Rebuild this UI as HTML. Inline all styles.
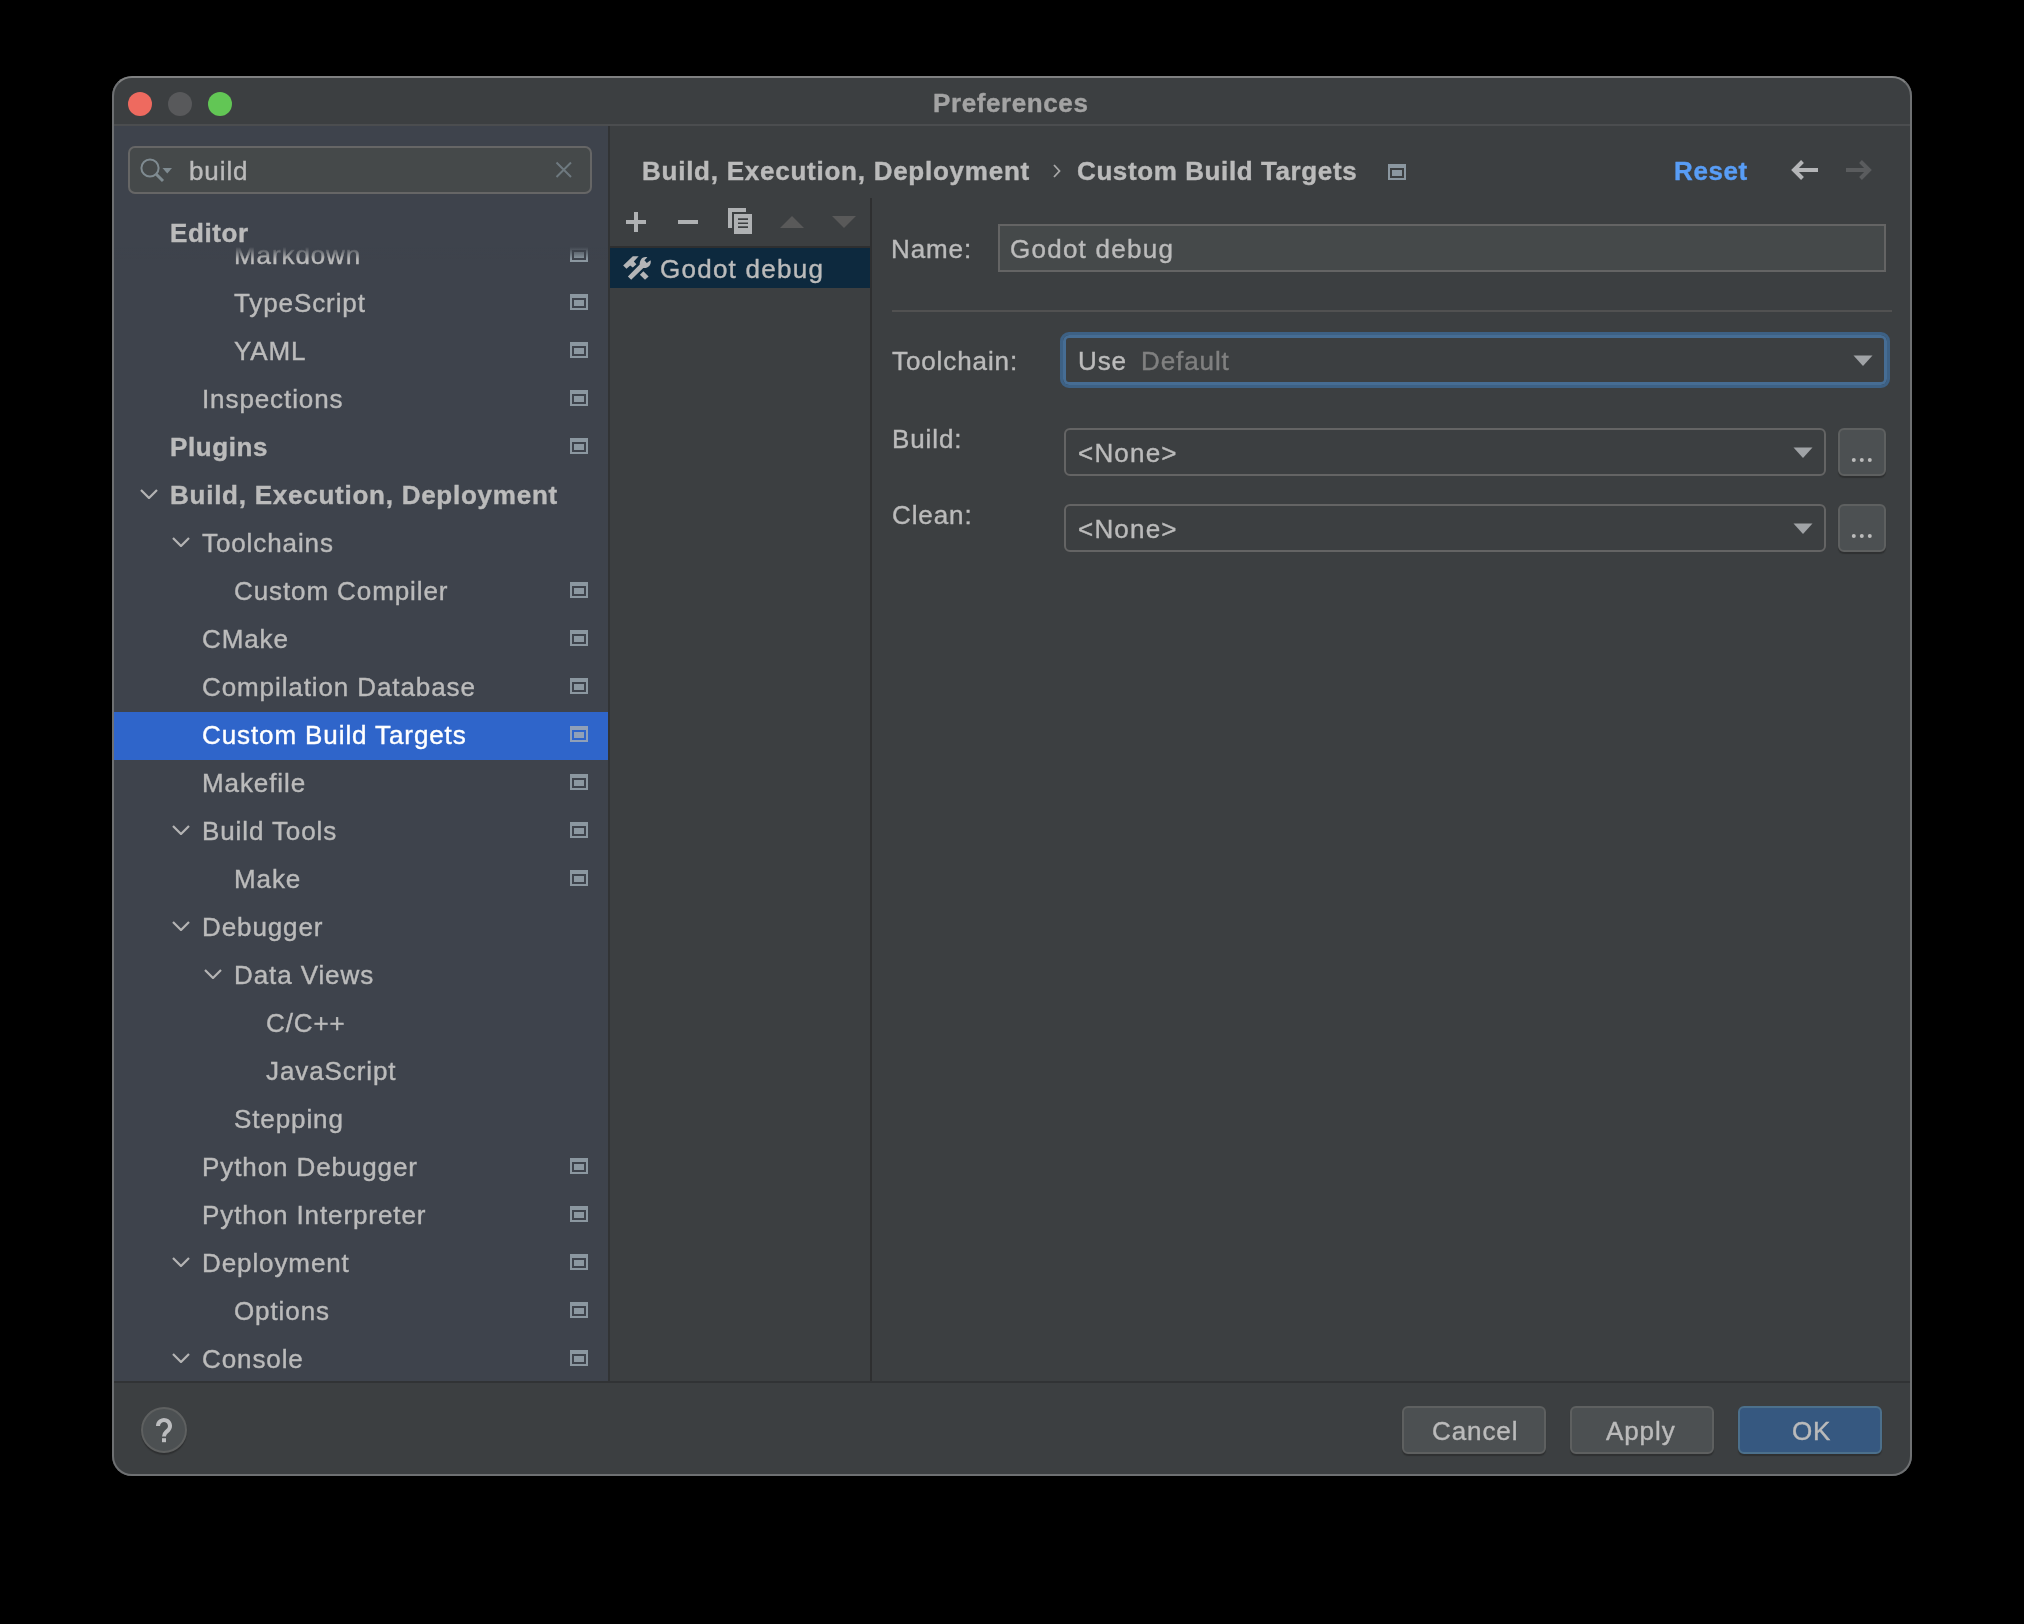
<!DOCTYPE html>
<html><head><meta charset="utf-8">
<style>
*{box-sizing:border-box;margin:0;padding:0}
html,body{width:2024px;height:1624px;background:#000;overflow:hidden}
body{position:relative;font-family:"Liberation Sans",sans-serif;color:#bbbbbb}
.a{position:absolute}
.t{position:absolute;font-size:26px;line-height:30px;white-space:pre;letter-spacing:0.9px;will-change:transform;-webkit-text-stroke:0.4px currentColor}
.b{font-weight:bold;letter-spacing:0.6px}
#win{position:absolute;left:112px;top:76px;width:1800px;height:1400px;border-radius:20px;background:#3c3f41;overflow:hidden}
#winborder{position:absolute;left:112px;top:76px;width:1800px;height:1400px;border-radius:20px;border:2px solid #6e7072;border-top-color:#7f8081;pointer-events:none}
.light{position:absolute;top:92px;width:24px;height:24px;border-radius:50%}
#side{position:absolute;left:112px;top:126px;width:496px;height:1256px;background:#3e434c;overflow:hidden}
.gear{position:absolute;left:570px;width:18px;height:16px}
.chev{position:absolute;width:18px;height:10px}
</style></head><body>
<div id="win"></div>

<!-- title bar -->
<div class="a" style="left:112px;top:124px;width:1800px;height:2px;background:#4b4d4f"></div>
<div class="light" style="left:128px;background:#ee6a5f"></div>
<div class="light" style="left:168px;background:#58595b"></div>
<div class="light" style="left:208px;background:#62c655"></div>
<div class="t b" style="left:933px;top:88px;color:#a3a3a3">Preferences</div>

<!-- sidebar -->
<div id="side">
<div class="a" style="left:0;top:586px;width:496px;height:48px;background:#2f65ca"></div>
<div class="t" style="left:122px;top:114px;">Markdown</div>
<svg class="gear" style="left:458px;top:120px" width="18" height="16"><path fill="#8b97a0" fill-rule="evenodd" d="M0 0H18V16H0ZM2 4V14H16V4ZM4 6H14V12H4Z"/></svg>
<div class="t" style="left:122px;top:162px;">TypeScript</div>
<svg class="gear" style="left:458px;top:168px" width="18" height="16"><path fill="#8b97a0" fill-rule="evenodd" d="M0 0H18V16H0ZM2 4V14H16V4ZM4 6H14V12H4Z"/></svg>
<div class="t" style="left:122px;top:210px;">YAML</div>
<svg class="gear" style="left:458px;top:216px" width="18" height="16"><path fill="#8b97a0" fill-rule="evenodd" d="M0 0H18V16H0ZM2 4V14H16V4ZM4 6H14V12H4Z"/></svg>
<div class="t" style="left:90px;top:258px;">Inspections</div>
<svg class="gear" style="left:458px;top:264px" width="18" height="16"><path fill="#8b97a0" fill-rule="evenodd" d="M0 0H18V16H0ZM2 4V14H16V4ZM4 6H14V12H4Z"/></svg>
<div class="t b" style="left:58px;top:306px;">Plugins</div>
<svg class="gear" style="left:458px;top:312px" width="18" height="16"><path fill="#8b97a0" fill-rule="evenodd" d="M0 0H18V16H0ZM2 4V14H16V4ZM4 6H14V12H4Z"/></svg>
<div class="t b" style="left:58px;top:354px;letter-spacing:0.75px">Build, Execution, Deployment</div>
<svg class="chev" style="left:28px;top:363px" width="18" height="10"><path d="M1 1L9 9L17 1" fill="none" stroke="#b4b4b4" stroke-width="2.2"/></svg>
<div class="t" style="left:90px;top:402px;">Toolchains</div>
<svg class="chev" style="left:60px;top:411px" width="18" height="10"><path d="M1 1L9 9L17 1" fill="none" stroke="#b4b4b4" stroke-width="2.2"/></svg>
<div class="t" style="left:122px;top:450px;">Custom Compiler</div>
<svg class="gear" style="left:458px;top:456px" width="18" height="16"><path fill="#8b97a0" fill-rule="evenodd" d="M0 0H18V16H0ZM2 4V14H16V4ZM4 6H14V12H4Z"/></svg>
<div class="t" style="left:90px;top:498px;">CMake</div>
<svg class="gear" style="left:458px;top:504px" width="18" height="16"><path fill="#8b97a0" fill-rule="evenodd" d="M0 0H18V16H0ZM2 4V14H16V4ZM4 6H14V12H4Z"/></svg>
<div class="t" style="left:90px;top:546px;">Compilation Database</div>
<svg class="gear" style="left:458px;top:552px" width="18" height="16"><path fill="#8b97a0" fill-rule="evenodd" d="M0 0H18V16H0ZM2 4V14H16V4ZM4 6H14V12H4Z"/></svg>
<div class="t" style="left:90px;top:594px; color:#ffffff;">Custom Build Targets</div>
<svg class="gear" style="left:458px;top:600px" width="18" height="16"><path fill="#90a0b8" fill-rule="evenodd" d="M0 0H18V16H0ZM2 4V14H16V4ZM4 6H14V12H4Z"/></svg>
<div class="t" style="left:90px;top:642px;">Makefile</div>
<svg class="gear" style="left:458px;top:648px" width="18" height="16"><path fill="#8b97a0" fill-rule="evenodd" d="M0 0H18V16H0ZM2 4V14H16V4ZM4 6H14V12H4Z"/></svg>
<div class="t" style="left:90px;top:690px;">Build Tools</div>
<svg class="gear" style="left:458px;top:696px" width="18" height="16"><path fill="#8b97a0" fill-rule="evenodd" d="M0 0H18V16H0ZM2 4V14H16V4ZM4 6H14V12H4Z"/></svg>
<svg class="chev" style="left:60px;top:699px" width="18" height="10"><path d="M1 1L9 9L17 1" fill="none" stroke="#b4b4b4" stroke-width="2.2"/></svg>
<div class="t" style="left:122px;top:738px;">Make</div>
<svg class="gear" style="left:458px;top:744px" width="18" height="16"><path fill="#8b97a0" fill-rule="evenodd" d="M0 0H18V16H0ZM2 4V14H16V4ZM4 6H14V12H4Z"/></svg>
<div class="t" style="left:90px;top:786px;">Debugger</div>
<svg class="chev" style="left:60px;top:795px" width="18" height="10"><path d="M1 1L9 9L17 1" fill="none" stroke="#b4b4b4" stroke-width="2.2"/></svg>
<div class="t" style="left:122px;top:834px;">Data Views</div>
<svg class="chev" style="left:92px;top:843px" width="18" height="10"><path d="M1 1L9 9L17 1" fill="none" stroke="#b4b4b4" stroke-width="2.2"/></svg>
<div class="t" style="left:154px;top:882px;">C/C++</div>
<div class="t" style="left:154px;top:930px;">JavaScript</div>
<div class="t" style="left:122px;top:978px;">Stepping</div>
<div class="t" style="left:90px;top:1026px;">Python Debugger</div>
<svg class="gear" style="left:458px;top:1032px" width="18" height="16"><path fill="#8b97a0" fill-rule="evenodd" d="M0 0H18V16H0ZM2 4V14H16V4ZM4 6H14V12H4Z"/></svg>
<div class="t" style="left:90px;top:1074px;">Python Interpreter</div>
<svg class="gear" style="left:458px;top:1080px" width="18" height="16"><path fill="#8b97a0" fill-rule="evenodd" d="M0 0H18V16H0ZM2 4V14H16V4ZM4 6H14V12H4Z"/></svg>
<div class="t" style="left:90px;top:1122px;">Deployment</div>
<svg class="gear" style="left:458px;top:1128px" width="18" height="16"><path fill="#8b97a0" fill-rule="evenodd" d="M0 0H18V16H0ZM2 4V14H16V4ZM4 6H14V12H4Z"/></svg>
<svg class="chev" style="left:60px;top:1131px" width="18" height="10"><path d="M1 1L9 9L17 1" fill="none" stroke="#b4b4b4" stroke-width="2.2"/></svg>
<div class="t" style="left:122px;top:1170px;">Options</div>
<svg class="gear" style="left:458px;top:1176px" width="18" height="16"><path fill="#8b97a0" fill-rule="evenodd" d="M0 0H18V16H0ZM2 4V14H16V4ZM4 6H14V12H4Z"/></svg>
<div class="t" style="left:90px;top:1218px;">Console</div>
<svg class="gear" style="left:458px;top:1224px" width="18" height="16"><path fill="#8b97a0" fill-rule="evenodd" d="M0 0H18V16H0ZM2 4V14H16V4ZM4 6H14V12H4Z"/></svg>
<svg class="chev" style="left:60px;top:1227px" width="18" height="10"><path d="M1 1L9 9L17 1" fill="none" stroke="#b4b4b4" stroke-width="2.2"/></svg>

<div class="a" style="left:0;top:70px;width:496px;height:51px;background:#3e434c"></div>
<div class="a" style="left:0;top:121px;width:496px;height:12px;background:linear-gradient(#3e434c,rgba(62,67,76,0))"></div>
<div class="t b" style="left:58px;top:92px">Editor</div>
<div class="a" style="left:16px;top:20px;width:464px;height:48px;border:2px solid #666666;border-radius:7px;background:#45494a"></div>
<svg class="a" style="left:26px;top:30px" width="50" height="30"><circle cx="12" cy="12" r="8.6" fill="none" stroke="#7f8b91" stroke-width="2"/><path d="M18 18L25 25" stroke="#7f8b91" stroke-width="3"/><path d="M24.5 12H34L29.25 17.6Z" fill="#7f8b91"/></svg>
<div class="t" style="left:77px;top:30px">build</div>
<svg class="a" style="left:442px;top:34px" width="20" height="20"><path d="M2.5 2.5L17 17M17 2.5L2.5 17" stroke="#6e797f" stroke-width="2"/></svg>
</div>
<div class="a" style="left:608px;top:126px;width:2px;height:1256px;background:#313335"></div>


<!-- breadcrumb -->
<div class="t b" style="left:642px;top:156px;letter-spacing:0.75px">Build, Execution, Deployment</div>
<svg class="a" style="left:1052px;top:163px" width="10" height="16"><path d="M2 2L7.5 8L2 14" fill="none" stroke="#a8a8a8" stroke-width="1.8"/></svg>
<div class="t b" style="left:1077px;top:156px">Custom Build Targets</div>
<svg class="a" style="left:1388px;top:164px" width="18" height="16"><path fill="#8b97a0" fill-rule="evenodd" d="M0 0H18V16H0ZM2 4V14H16V4ZM4 6H14V12H4Z"/></svg>
<div class="t b" style="left:1674px;top:156px;color:#589df6">Reset</div>
<svg class="a" style="left:1790px;top:158px" width="32" height="24"><path d="M4 12H28M12.5 3.5L4 12L12.5 20.5" fill="none" stroke="#b4b5b7" stroke-width="4"/></svg>
<svg class="a" style="left:1843px;top:158px" width="32" height="24"><path d="M3 12H27M17.5 3.5L26 12L17.5 20.5" fill="none" stroke="#5a5c5e" stroke-width="4"/></svg>

<!-- toolbar -->
<svg class="a" style="left:620px;top:206px" width="240" height="32">
 <path d="M14 6H18V26H14ZM6 14H26V18H6Z" fill="#afb1b3"/>
 <path d="M58 14H78V18H58Z" fill="#afb1b3"/>
 <path d="M108 2H126V6H112V22H108Z" fill="#afb1b3"/>
 <path fill-rule="evenodd" d="M114 8H132V28H114ZM118 12.3V14H128V12.3ZM118 16.4V18.1H128V16.4ZM118 20.3V22.1H128V20.3Z" fill="#afb1b3"/>
 <path d="M160 22L172 10L184 22Z" fill="#595959"/>
 <path d="M212 10L236 10L224 22Z" fill="#595959"/>
</svg>
<div class="a" style="left:610px;top:246px;width:260px;height:2px;background:#2e2f30"></div>
<div class="a" style="left:870px;top:198px;width:2px;height:1184px;background:#2e2f30"></div>
<div class="a" style="left:610px;top:248px;width:260px;height:40px;background:#0d293e"></div>
<svg class="a" style="left:623px;top:256px" width="28" height="24">
 <path d="M0.15 9.4L9.8 0.24H15.7L10.8 5.5L13.4 8.2L9.8 11.4L7.2 9.4L3.5 12.7Z" fill="#b4b5b7"/>
 <path d="M16.9 18.7L20.4 15.3L25.6 20.4L22 23.8Z" fill="#b4b5b7"/>
 <path d="M4.9 20.6L16.7 8.6C16.6 7.5 16.8 6.4 17.1 5.5C17.7 3.6 18.6 2.4 19.7 1.7C21.2 0.9 22.8 0.9 24.4 1.3L21.4 4.3L23.8 7L27.5 4.3C27.9 5.2 27.9 6.1 27.7 7C27.4 8.5 26.6 9.8 25.6 10.6C24.6 11.4 23.6 11.9 22.6 12H20.3L8.2 23.8Z" fill="#b4b5b7"/>
</svg>
<div class="t" style="left:660px;top:254px;letter-spacing:1.25px">Godot debug</div>

<!-- form -->
<div class="t" style="left:891px;top:234px">Name:</div>
<div class="a" style="left:998px;top:224px;width:888px;height:48px;border:2px solid #646464;background:#45494a"></div>
<div class="t" style="left:1010px;top:234px;letter-spacing:1.25px">Godot debug</div>
<div class="a" style="left:892px;top:310px;width:1000px;height:2px;background:#515151"></div>

<div class="t" style="left:892px;top:346px">Toolchain:</div>
<div class="a" style="left:1060px;top:332px;width:830px;height:56px;border:3px solid #3d6185;border-radius:9px;box-shadow:inset 0 0 0 3px #466d94"></div>
<div class="t" style="left:1078px;top:346px">Use</div>
<div class="t" style="left:1141px;top:346px;color:#808080">Default</div>
<svg class="a" style="left:1853px;top:355px" width="20" height="12"><path d="M0.5 0.5H19.5L10 11Z" fill="#a0a3a6"/></svg>

<div class="t" style="left:892px;top:424px">Build:</div>
<div class="a" style="left:1064px;top:428px;width:762px;height:48px;border:2px solid #646464;border-radius:6px"></div>
<div class="t" style="left:1078px;top:438px;letter-spacing:1.2px">&lt;None&gt;</div>
<svg class="a" style="left:1793px;top:447px" width="20" height="12"><path d="M0.5 0.5H19.5L10 11Z" fill="#a0a3a6"/></svg>
<div class="a" style="left:1838px;top:428px;width:48px;height:48px;border:2px solid #5e6060;border-radius:6px;background:#4c5052;box-shadow:0 2px 1px rgba(30,30,30,0.45)"></div>
<svg class="a" style="left:1850px;top:456px" width="24" height="8"><circle cx="3.8" cy="4" r="2" fill="#bbb"/><circle cx="11.8" cy="4" r="2" fill="#bbb"/><circle cx="19.8" cy="4" r="2" fill="#bbb"/></svg>

<div class="t" style="left:892px;top:500px">Clean:</div>
<div class="a" style="left:1064px;top:504px;width:762px;height:48px;border:2px solid #646464;border-radius:6px"></div>
<div class="t" style="left:1078px;top:514px;letter-spacing:1.2px">&lt;None&gt;</div>
<svg class="a" style="left:1793px;top:523px" width="20" height="12"><path d="M0.5 0.5H19.5L10 11Z" fill="#a0a3a6"/></svg>
<div class="a" style="left:1838px;top:504px;width:48px;height:48px;border:2px solid #5e6060;border-radius:6px;background:#4c5052;box-shadow:0 2px 1px rgba(30,30,30,0.45)"></div>
<svg class="a" style="left:1850px;top:532px" width="24" height="8"><circle cx="3.8" cy="4" r="2" fill="#bbb"/><circle cx="11.8" cy="4" r="2" fill="#bbb"/><circle cx="19.8" cy="4" r="2" fill="#bbb"/></svg>

<!-- bottom buttons -->
<div class="a" style="left:141px;top:1407px;width:46px;height:46px;border:2px solid #5e6060;border-radius:50%;background:#4c5052;box-shadow:0 2px 1px rgba(30,30,30,0.45)"></div>
<svg class="a" style="left:150px;top:1414px" width="28" height="32"><path d="M8 12A6 6 0 1 1 18.6 15.8L16 18.2Q14 20 14 22.5" fill="none" stroke="#bcbdbf" stroke-width="4"/><rect x="12" y="24.2" width="4" height="4" fill="#bcbdbf"/></svg>
<div class="a" style="left:1402px;top:1406px;width:144px;height:48px;border:2px solid #5e6060;border-radius:6px;background:#4c5052;box-shadow:0 2px 1px rgba(30,30,30,0.45)"></div>
<div class="t" style="left:1432px;top:1416px">Cancel</div>
<div class="a" style="left:1570px;top:1406px;width:144px;height:48px;border:2px solid #5e6060;border-radius:6px;background:#4c5052;box-shadow:0 2px 1px rgba(30,30,30,0.45)"></div>
<div class="t" style="left:1606px;top:1416px">Apply</div>
<div class="a" style="left:1738px;top:1406px;width:144px;height:48px;border:2px solid #4c708c;border-radius:6px;background:#365880;box-shadow:0 2px 1px rgba(30,30,30,0.45)"></div>
<div class="t" style="left:1792px;top:1416px">OK</div>

<!-- bottom -->
<div class="a" style="left:112px;top:1381px;width:1800px;height:2px;background:#313335"></div>

<div id="winborder"></div>
</body></html>
